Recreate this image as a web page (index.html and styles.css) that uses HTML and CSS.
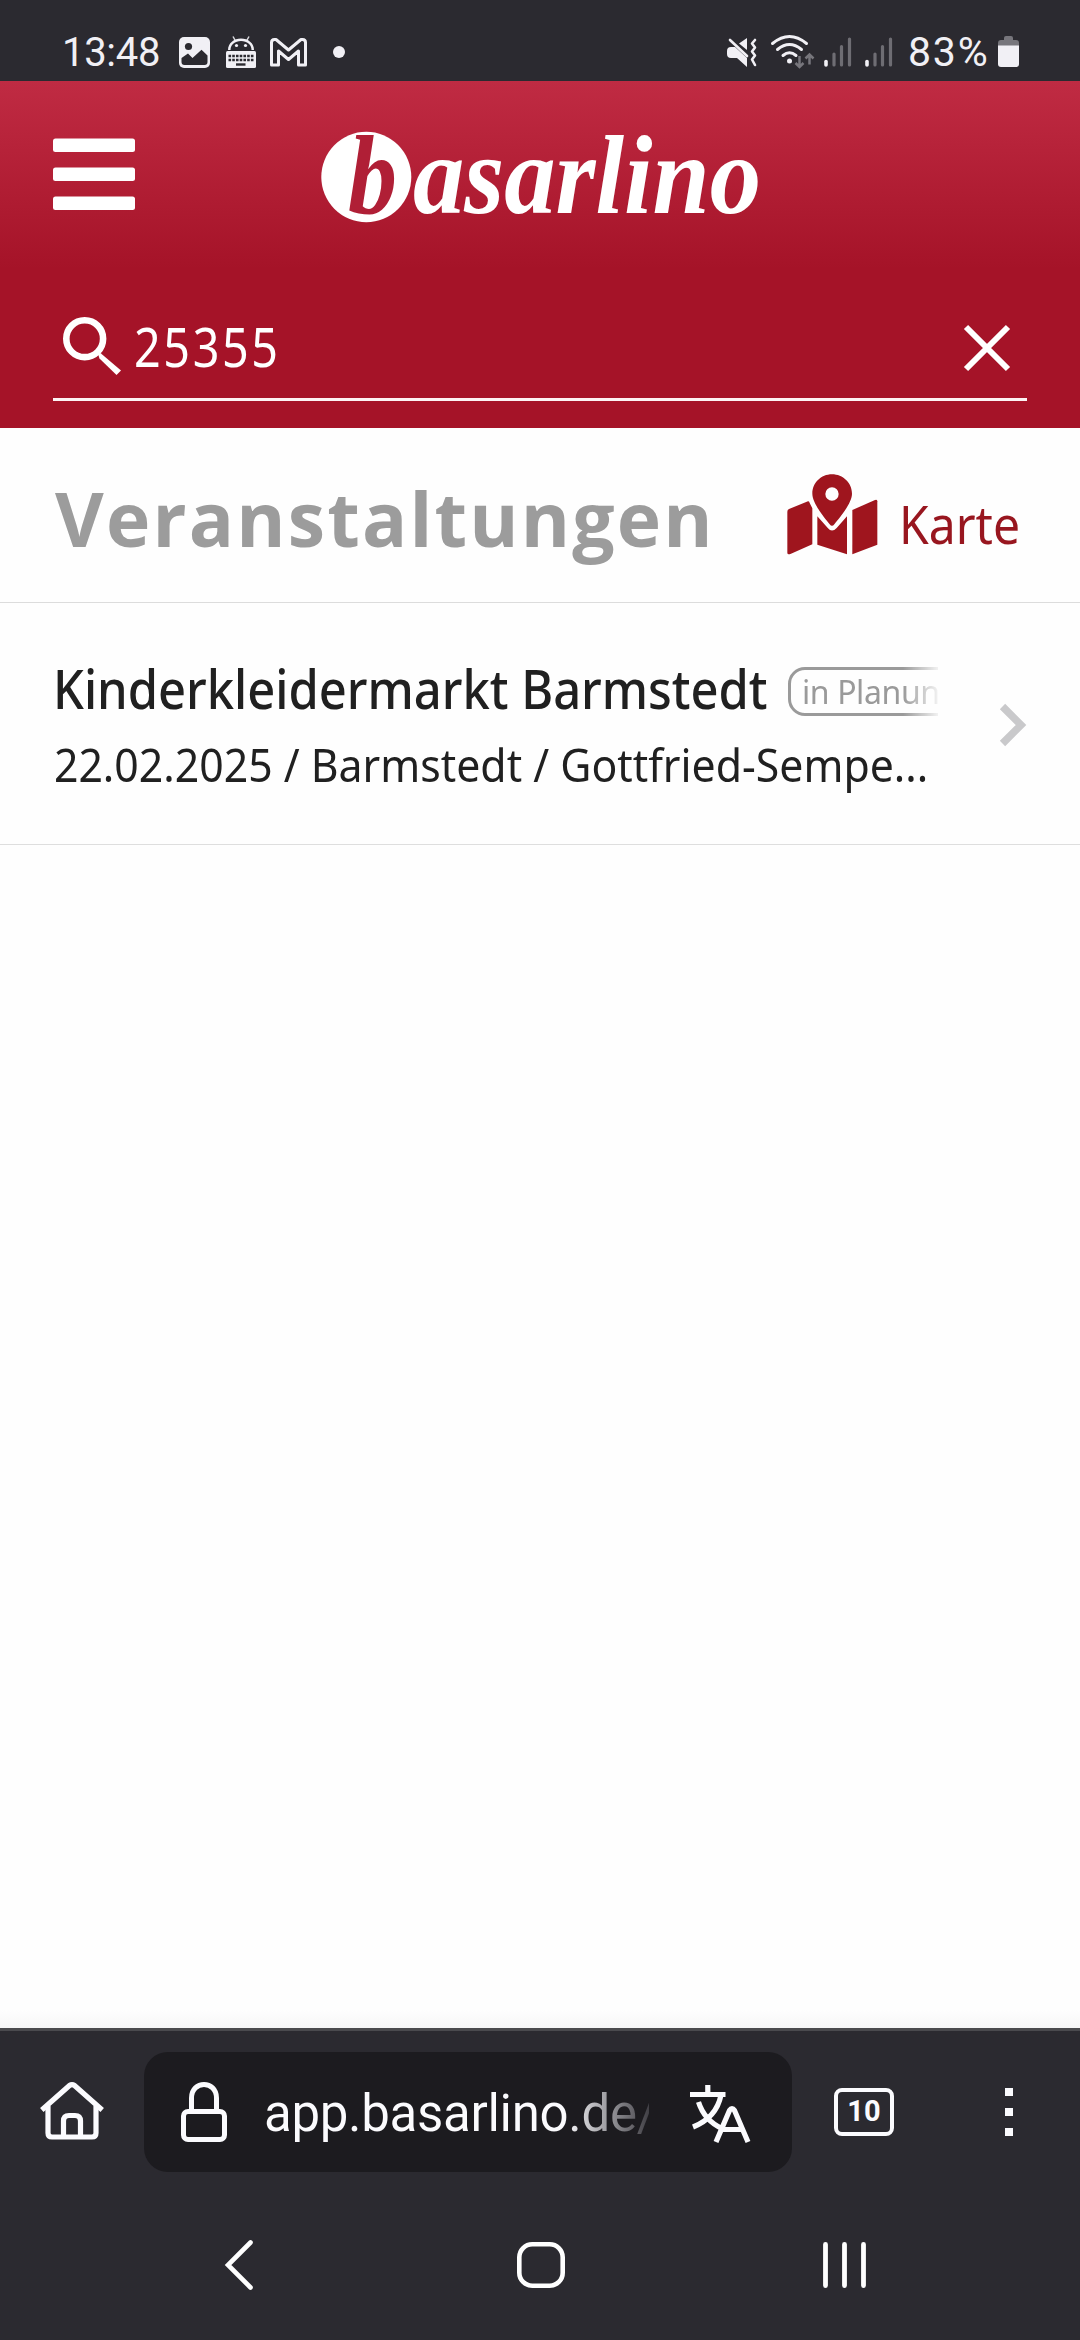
FILE: index.html
```html
<!DOCTYPE html>
<html lang="de">
  <head>
    <meta charset="UTF-8" />
    <meta name="viewport" content="width=device-width, initial-scale=1.0" />
    <title>basarlino</title>
    <link rel="stylesheet" href="styles.css">
  </head>
  <body>
    <div class="status-bar">
      <span class="time">13:48</span>
      <svg class="icon-image" width="31" height="31" viewBox="0 0 31 31">
        <rect width="31" height="31" rx="5" fill="#f1f0f5" />
        <circle cx="9.500" cy="9.500" r="3.600" fill="#2b2a30" />
        <path d="M2.500 21L9 16.500L13.500 21L22.500 12.800L28.500 18.500V25Q28.500 28 25.500 28H5.500Q2.500 28 2.500 25Z" fill="#2b2a30" />
      </svg>
      <svg class="icon-android" width="30" height="32" viewBox="0 0 30 32">
        <path d="M7 0.500L9.500 5M23 0.500L20.500 5" stroke="#d8d8dd" stroke-width="1.500" fill="none" />
        <path d="M2 14C2 7 8 2.500 15 2.500S28 7 28 14Z" fill="#f1f0f5" />
        <path d="M4.500 14C4.500 8.500 9 5 15 5S25.500 8.500 25.500 14Z" fill="#2b2a30" />
        <circle cx="10.500" cy="9.500" r="1.600" fill="#f1f0f5" />
        <circle cx="19.500" cy="9.500" r="1.600" fill="#f1f0f5" />
        <rect y="15" width="30" height="17" rx="1.500" fill="#f1f0f5" />
        <path d="M2.500 20H27.500M2.500 24H27.500" stroke="#2b2a30" stroke-width="2.400" stroke-dasharray="2.600 1.130" />
        <path d="M10 28.500H19.500" stroke="#2b2a30" stroke-width="2.400" />
      </svg>
      <svg class="icon-mail" width="37" height="29" viewBox="0 0 37 29">
        <path d="M1.500 4.500Q1.500 1.500 4.500 1.500H6L18.500 12L31 1.500H32.500Q35.500 1.500 35.500 4.500V27H28.500V13L18.500 21.500L8.500 13V27H1.500Z" fill="none" stroke="#f1f0f5" stroke-width="3" stroke-linejoin="round" />
      </svg>
      <span class="more-dot"></span>

      <div class="status-right">
        <svg class="icon-mute" width="31" height="29" viewBox="0 0 31 29">
          <path d="M0 13Q0 9 4 9H8L20 20V29L10 20H4Q0 20 0 16ZM12 5.500L20 0V12Z" fill="#f1f0f5" />
          <path d="M3 2L20 18" stroke="#f1f0f5" stroke-width="2.600" stroke-linecap="round" />
          <path d="M28 2L25 5.500L28 9.500L25 13.500L28 17.500L25 21.500L28 27" fill="none" stroke="#f1f0f5" stroke-width="2.600" stroke-linecap="round" stroke-linejoin="round" />
        </svg>
        <svg class="icon-wifi" width="44" height="34" viewBox="0 0 44 34">
          <g fill="none" stroke="#f1f0f5" stroke-width="3" stroke-linecap="round">
            <path d="M1.500 8.500Q18.500 -5.500 35.500 8.500" />
            <path d="M6.500 14.500Q18.500 4.500 30.500 14.500" />
            <path d="M12 20.500Q18.500 15 25 20.500" />
          </g>
          <circle cx="18.500" cy="26" r="2.500" fill="#f1f0f5" />
          <path d="M28.500 21V31.500M24.500 28L28.500 32L32.500 28M38.500 29.500V20M34.500 23.500L38.500 19.500L42.500 23.500" fill="none" stroke="#77767c" stroke-width="2.500" />
        </svg>
        <svg class="icon-signal" width="28" height="30" viewBox="0 0 28 30">
          <path d="M2 24.500V28" stroke="#f1f0f5" stroke-width="3.600" stroke-linecap="round" />
          <path d="M10 17V28M17.500 9.500V28M25.500 2V28" stroke="#6e6d73" stroke-width="3.200" stroke-linecap="round" />
        </svg>
        <svg class="icon-signal" width="28" height="30" viewBox="0 0 28 30">
          <path d="M2 24.500V28" stroke="#f1f0f5" stroke-width="3.600" stroke-linecap="round" />
          <path d="M10 17V28M17.500 9.500V28M25.500 2V28" stroke="#6e6d73" stroke-width="3.200" stroke-linecap="round" />
        </svg>
        <span class="battery-text">83%</span>
        <svg class="icon-battery" width="21" height="31" viewBox="0 0 21 31">
          <path d="M6 2Q6 0 8 0H13Q15 0 15 2V4H18Q21 4 21 7V12H0V7Q0 4 3 4H6Z" fill="#77767c" />
          <path d="M0 9.500H21V28Q21 31 18 31H3Q0 31 0 28Z" fill="#f1f0f5" />
        </svg>
      </div>
    </div>

    <header class="header">
      <div class="header-top">
        <svg class="menu" width="82" height="73" viewBox="0 0 82 73">
          <rect y="0.500" width="82" height="13.500" rx="2.500" fill="#fff" />
          <rect y="29.500" width="82" height="13.500" rx="2.500" fill="#fff" />
          <rect y="58.500" width="82" height="13.500" rx="2.500" fill="#fff" />
        </svg>
        <svg class="logo" width="440" height="92" viewBox="0 0 440 92">
          <ellipse cx="45.300" cy="46" rx="45" ry="45.200" fill="#fff" />
          <text class="logo-text logo-b" x="27" y="82" textLength="49" lengthAdjust="spacingAndGlyphs">b</text>
          <text class="logo-text" x="92" y="82" textLength="348" lengthAdjust="spacingAndGlyphs">asarlino</text>
        </svg>
      </div>
      <div class="search">
        <svg class="search-icon" width="58" height="58" viewBox="0 0 58 58">
          <circle cx="21.700" cy="21.700" r="18.400" fill="none" stroke="#fff" stroke-width="6.600" />
          <path d="M34 34L38 36.500L58 53.500L53.500 58L36.500 41.500Z" fill="#fff" />
        </svg>
        <span class="search-value">25355</span>
        <svg class="clear" width="46" height="46" viewBox="0 0 46 46">
          <path d="M2 2L44 44M44 2L2 44" stroke="#fff" stroke-width="6" />
        </svg>
      </div>
    </header>

    <main>
      <div class="title-row">
        <h1>Veranstaltungen</h1>
        <a class="map-link">
          <svg width="91" height="81" viewBox="0 0 273 243">
            <g fill="#9f151e">
              <path d="M1 113Q1 107 6 105L63 82Q67 81 68 87L76 103V211L12 239Q1 244 1 236Z" />
              <path d="M91 127L123 163Q135 177 149 162L180 127V241L91 212Z" />
              <path d="M196 108L264 78Q271 75 271 82V212L196 241Z" />
              <path d="M135 1C168 1 195 27 195 59C195 87 158 131 142 151Q135 160 128 151C112 131 76 87 76 59C76 27 102 1 135 1ZM135 40A20 20 0 1 0 135 80A20 20 0 1 0 135 40Z" fill-rule="evenodd" />
            </g>
          </svg>
          <span>Karte</span>
        </a>
      </div>

      <div class="event">
        <div class="event-body">
          <div class="event-title">
            <span class="event-name">Kinderkleidermarkt Barmstedt</span>
            <span class="badge">in Planung</span>
          </div>
          <div class="event-info">22.02.2025 / Barmstedt / Gottfried-Sempe...</div>
        </div>
        <svg class="chevron" width="27" height="42" viewBox="0 0 27 42">
          <path d="M2.500 2.500L21 21L2.500 39.500" fill="none" stroke="#c9c9cb" stroke-width="7.500" />
        </svg>
      </div>
    </main>

    <div class="browser-bar">
      <svg class="home" width="64" height="58" viewBox="0 0 64 58">
        <g fill="none" stroke="#fbfbfe" stroke-width="5.200" stroke-linejoin="round">
          <path d="M1.800 28L29.500 3.500Q32 1.800 34.500 3.500L62.200 28" />
          <path d="M8 24V51Q8 55 12 55H52Q56 55 56 51V24" />
          <path d="M23.500 54V39Q23.500 33.500 29 33.500H35Q40.500 33.500 40.500 39V54" />
        </g>
      </svg>
      <div class="url-bar">
        <svg class="lock" width="46" height="60" viewBox="0 0 46 60">
          <g fill="none" stroke="#fbfbfe" stroke-width="5">
            <path d="M10.500 29V16C10.500 -2 35.500 -2 35.500 16V29" />
            <rect x="2.500" y="29.500" width="41" height="28" rx="4.500" />
          </g>
        </svg>
        <span class="url">app.basarlino.de/</span>
        <svg class="translate" width="60" height="57" viewBox="0 0 60 57">
          <g fill="none" stroke="#fbfbfe" stroke-width="5.200">
            <path d="M0 9.500H35.500M17.800 0V9.500" />
            <path d="M31 10C28 25 18 36 3 42" />
            <path d="M8.500 17C12 28 20 38 32 43.500" />
            <path d="M26 57L39.500 25.500Q42 21.500 44.500 25.500L58 57M32.500 44.500H52" />
          </g>
        </svg>
      </div>
      <span class="tabs">10</span>
      <svg class="dots" width="8" height="48" viewBox="0 0 8 48">
        <path d="M0 0H8V8H0ZM0 20H8V28H0ZM0 40H8V48H0Z" fill="#fbfbfe" />
      </svg>
    </div>

    <div class="nav-bar">
      <svg width="28" height="50" viewBox="0 0 28 50">
        <path d="M25.500 2.500L3 25L25.500 47.500" fill="none" stroke="#fff" stroke-width="4.600" stroke-linecap="round" />
      </svg>
      <svg class="nav-home" width="48" height="46" viewBox="0 0 48 46">
        <rect x="2.300" y="2.300" width="43.400" height="41.400" rx="13" fill="none" stroke="#fff" stroke-width="4.600" />
      </svg>
      <svg class="nav-recents" width="43" height="46" viewBox="0 0 43 46">
        <path d="M2.500 2.500V43.500M21.500 2.500V43.500M40.500 2.500V43.500" stroke="#fff" stroke-width="4.800" stroke-linecap="round" />
      </svg>
    </div>
  </body>
</html>
```
FILE: styles.css
```css
* {
  margin: 0;
  padding: 0;
  box-sizing: border-box;
}

body {
  width: 1080px;
  height: 2340px;
  display: flex;
  flex-direction: column;
  background: #fefefe;
  font-family: "Noto Sans", sans-serif;
  color: #202020;
  overflow: hidden;
}

svg {
  display: block;
  flex-shrink: 0;
  overflow: visible;
}

/* Android status bar */
.status-bar {
  height: 81px;
  display: flex;
  align-items: flex-start;
  padding: 36px 61px 0 62px;
  background: #2b2a30;
  color: #f1f0f5;
  font-family: Roboto, sans-serif;
  font-size: 40px;
  line-height: 33px;
}

.time {
  width: 117px;
  letter-spacing: -0.3px;
}

.icon-image {
  margin-top: 1px;
}

.icon-android {
  margin-left: 16px;
}

.icon-mail {
  margin-top: 2px;
  margin-left: 14px;
}

.more-dot {
  width: 12px;
  height: 12px;
  margin: 10px 0 0 26px;
  border-radius: 50%;
  background: #f1f0f5;
}

.status-right {
  display: flex;
  margin-left: auto;
}

.icon-mute {
  margin: 2px 13px 0 0;
}

.icon-wifi {
  margin: -1px 9px 0 0;
}

.icon-signal {
  margin: 1px 13px 0 0;
}

.battery-text {
  width: 90px;
  margin-left: 2px;
  font-size: 41px;
  letter-spacing: 1.8px;
}

/* Header */
.header {
  height: 347px;
  padding: 50px 53px 0;
  background: linear-gradient(#c02b43, #a51328 188px);
}

.header-top {
  display: flex;
  height: 92px;
}

.menu {
  margin-top: 7px;
}

.logo {
  margin-left: 186px;
}

.logo-text {
  font-family: "Liberation Serif", serif;
  font-size: 112px;
  font-weight: bold;
  font-style: italic;
  fill: #fff;
}

.logo-b {
  fill: #b01f36;
}

.search {
  height: 100px;
  margin-top: 78px;
  display: flex;
  align-items: center;
  border-bottom: 3px solid #fdf3f4;
  color: #fff;
}

.search-icon {
  margin: 0 13px 8px 10px;
}

.search-value {
  flex: 1;
  padding-bottom: 7px;
  font-size: 54px;
  line-height: 90px;
  letter-spacing: 3px;
  transform: scaleX(0.865);
  transform-origin: left;
}

.clear {
  margin: 0 17px 3px 0;
}

/* Event list */
main {
  flex: 1;
  background: linear-gradient(to top, #f6f6f7, #fefefe 18px);
}

.title-row {
  height: 175px;
  display: flex;
  justify-content: space-between;
  padding: 45px 62px 0 55px;
  border-bottom: 1px solid #dcdcdc;
}

h1 {
  font-family: "Open Sans", sans-serif;
  font-size: 75px;
  line-height: 91px;
  letter-spacing: 2.2px;
  color: #9c9c9c;
}

.map-link {
  display: flex;
  color: #98161f;
  font-size: 52px;
  line-height: 102px;
}

.map-link svg {
  margin-top: 1px;
}

.map-link span {
  width: 119px;
  margin-left: 21px;
  transform: scaleX(0.925);
  transform-origin: left;
}

.event {
  height: 242px;
  display: flex;
  padding: 54px 53px 0 53px;
  border-bottom: 1px solid #dedede;
}

.event-body {
  width: 885px;
}

/* long titles fade out at the right edge */
.event-title {
  height: 64px;
  padding-top: 10px;
  display: flex;
  overflow: hidden;
  white-space: nowrap;
  -webkit-mask-image: linear-gradient(to right, #000 850px, transparent 890px);
  mask-image: linear-gradient(to right, #000 850px, transparent 890px);
}

.event-name {
  width: 735px;
  flex-shrink: 0;
  font-size: 54px;
  font-weight: 500;
  line-height: 42px;
  transform: scaleX(0.905);
  transform-origin: left;
}

.badge {
  flex-shrink: 0;
  height: 49px;
  padding: 0 11px;
  border: 3px solid #9a9a9a;
  border-radius: 17px;
  color: #9a9a9a;
  font-size: 32px;
  line-height: 43px;
  letter-spacing: -0.4px;
}

.event-info {
  font-size: 46px;
  line-height: 52px;
  white-space: nowrap;
  margin-top: 17px;
  padding-left: 1px;
  transform: scaleX(0.93);
  transform-origin: left;
}

.chevron {
  margin: 47px 0 0 62px;
}

/* Browser toolbar */
.browser-bar {
  height: 168px;
  display: flex;
  padding: 21px 0 0 40px;
  border-top: 3px solid #4a4a4e;
  background: #2b2a30;
  color: #fbfbfe;
  font-family: Roboto, sans-serif;
}

.home {
  margin-top: 30px;
}

.url-bar {
  width: 648px;
  height: 120px;
  display: flex;
  align-items: center;
  margin-left: 40px;
  padding-left: 37px;
  border-radius: 24px;
  background: #1c1b1f;
}

.url {
  width: 385px;
  margin-left: 37px;
  font-size: 51px;
  line-height: 110px;
  padding-top: 3px;
  letter-spacing: -0.3px;
  background: linear-gradient(to right, #fbfbfe 300px, #2b2a30 395px);
  -webkit-background-clip: text;
  background-clip: text;
  color: transparent;
}

.translate {
  margin: 3px 0 0 41px;
}

.tabs {
  width: 60px;
  height: 48px;
  margin: 36px 0 0 42px;
  border: 4.5px solid #fbfbfe;
  border-radius: 8px;
  font-size: 29px;
  font-weight: bold;
  line-height: 38px;
  text-align: center;
}

.dots {
  margin: 36px 0 0 111px;
}

.nav-bar {
  height: 144px;
  display: flex;
  align-items: center;
  padding: 0 0 6px 225px;
  background: #2b2a30;
}

.nav-home {
  margin-left: 264px;
}

.nav-recents {
  margin-left: 258px;
}
```
